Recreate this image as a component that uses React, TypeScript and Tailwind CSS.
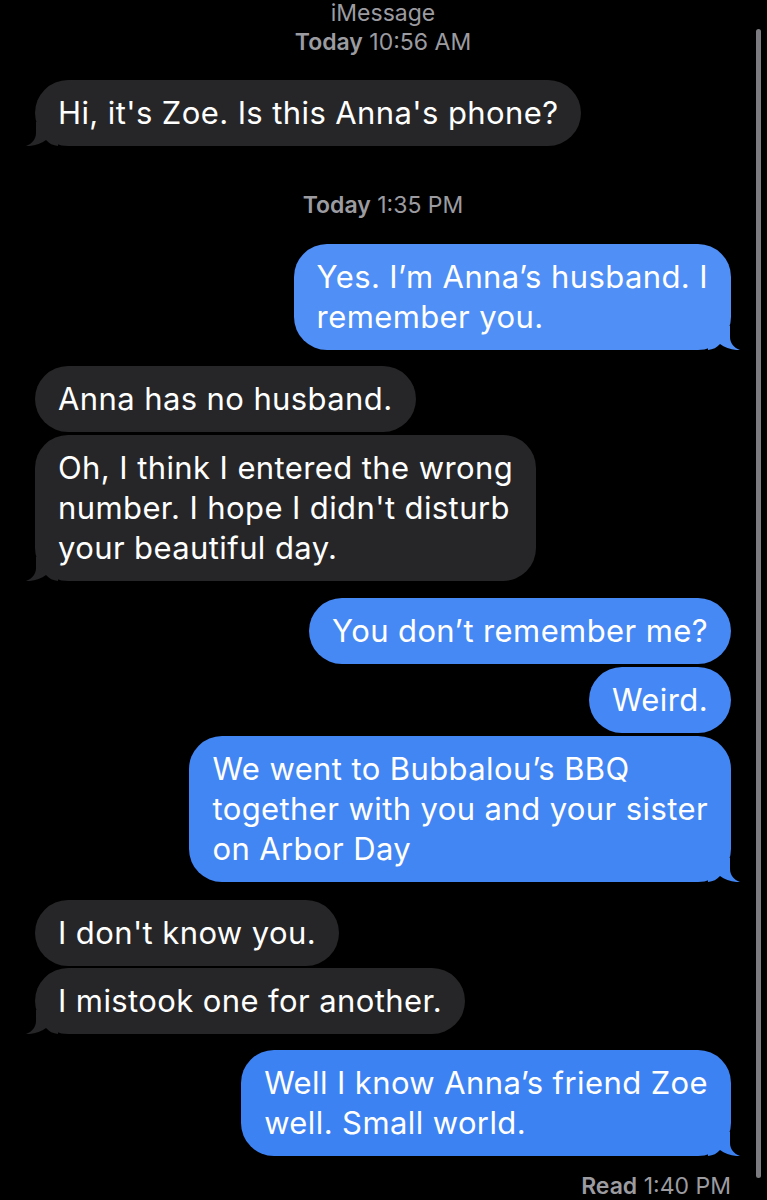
type Side = 'in' | 'out';

type Msg = {
  side: Side;
  lines: string[];
  tail?: boolean;
  bg: string;
  fill: string;
  mt: string;
};

const messages: Msg[] = [
  { side: 'in', lines: ["Hi, it's Zoe. Is this Anna's phone?"], tail: true, bg: 'bg-[#262628]', fill: 'fill-[#262628]', mt: 'mt-[25px]' },
];

const afterStamp: Msg[] = [
  { side: 'out', lines: ['Yes. I’m Anna’s husband. I', 'remember you.'], tail: true, bg: 'bg-[#4f8ff6]', fill: 'fill-[#4f8ff6]', mt: 'mt-[26px]' },
  { side: 'in', lines: ['Anna has no husband.'], bg: 'bg-[#262628]', fill: 'fill-[#262628]', mt: 'mt-[16px]' },
  { side: 'in', lines: ['Oh, I think I entered the wrong', "number. I hope I didn't disturb", 'your beautiful day.'], tail: true, bg: 'bg-[#262628]', fill: 'fill-[#262628]', mt: 'mt-[3px]' },
  { side: 'out', lines: ['You don’t remember me?'], bg: 'bg-[#4689f5]', fill: 'fill-[#4689f5]', mt: 'mt-[17px]' },
  { side: 'out', lines: ['Weird.'], bg: 'bg-[#4588f5]', fill: 'fill-[#4588f5]', mt: 'mt-[3px]' },
  { side: 'out', lines: ['We went to Bubbalou’s BBQ', 'together with you and your sister', 'on Arbor Day'], tail: true, bg: 'bg-[#4286f4]', fill: 'fill-[#4286f4]', mt: 'mt-[3px]' },
  { side: 'in', lines: ["I don't know you."], bg: 'bg-[#262628]', fill: 'fill-[#262628]', mt: 'mt-[18px]' },
  { side: 'in', lines: ['I mistook one for another.'], tail: true, bg: 'bg-[#262628]', fill: 'fill-[#262628]', mt: 'mt-[2px]' },
  { side: 'out', lines: ['Well I know Anna’s friend Zoe', 'well. Small world.'], tail: true, bg: 'bg-[#3d82f3]', fill: 'fill-[#3d82f3]', mt: 'mt-[16px]' },
];

function Tail({ side, fill }: { side: Side; fill: string }) {
  return (
    <svg
      width="32"
      height="24"
      viewBox="0 0 32 24"
      className={`absolute bottom-0 ${side === 'in' ? 'left-[-9px]' : 'right-[-9px] -scale-x-100'} ${fill}`}
    >
      <path d="M10 0 L10 11 C10 17 6 22 0 24 C7 24.5 15 22 20 18 C23 21.5 27 23.5 32 24 L32 0 Z" />
    </svg>
  );
}

function Bubble({ msg }: { msg: Msg }) {
  return (
    <div className={`flex ${msg.side === 'in' ? 'justify-start' : 'justify-end'} ${msg.mt}`}>
      <div className={`relative rounded-[33px] px-[23px] py-[13px] text-[31px] leading-[40px] tracking-[0.4px] text-white ${msg.bg}`}>
        {msg.tail && <Tail side={msg.side} fill={msg.fill} />}
        <div className="relative">
          {msg.lines.map((l) => (
            <div key={l} className="whitespace-nowrap">{l}</div>
          ))}
        </div>
      </div>
    </div>
  );
}

export default function App() {
  return (
    <div className="relative h-[1200px] w-[767px] overflow-hidden bg-black font-['Inter',sans-serif]">
      <div className="flex flex-col pl-[35px] pr-[36px]">
        <div className="text-center text-[23px] leading-[26px] text-[#9b9ba0]">iMessage</div>
        <div className="mt-[3px] text-center text-[23px] leading-[26px] text-[#9b9ba0]">
          <span className="font-semibold">Today</span> 10:56 AM
        </div>

        {messages.map((m, i) => (
          <Bubble key={i} msg={m} />
        ))}

        <div className="mt-[46px] text-center text-[23px] leading-[26px] text-[#9b9ba0]">
          <span className="font-semibold">Today</span> 1:35 PM
        </div>

        {afterStamp.map((m, i) => (
          <Bubble key={i} msg={m} />
        ))}

        <div className="mt-[17px] text-right text-[23px] leading-[26px] text-[#9b9ba0]">
          <span className="font-semibold">Read</span> 1:40 PM
        </div>
      </div>

      {/* scroll indicator */}
      <div className="absolute right-[6px] top-[29px] h-[1149px] w-[5px] rounded-full bg-[#7c7c80]" />
    </div>
  );
}
